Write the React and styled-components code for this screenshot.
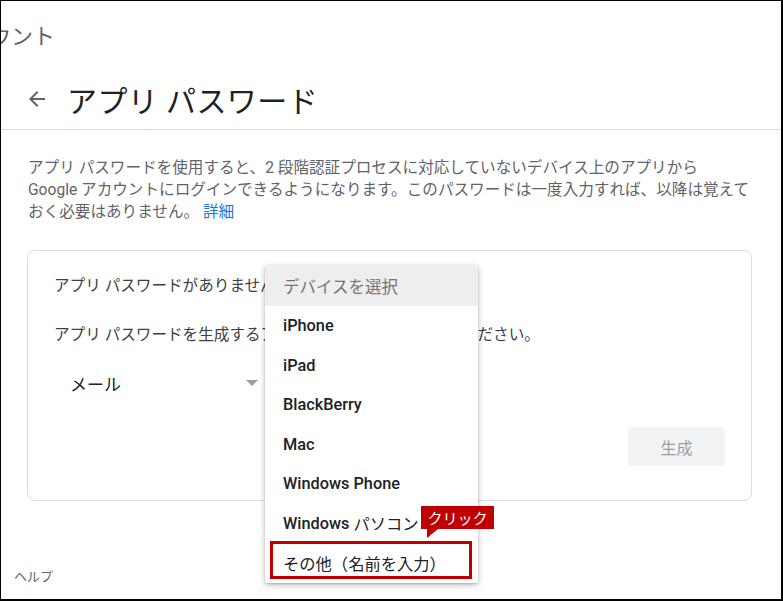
import React from 'react';
import styled, { createGlobalStyle } from 'styled-components';

const GlobalStyle = createGlobalStyle`
  body {
    margin: 0;
    background: #fff;
    font-family: Roboto, "Noto Sans CJK JP", sans-serif;
  }
  * {
    box-sizing: border-box;
  }
`;

const devices = ['iPhone', 'iPad', 'BlackBerry', 'Mac', 'Windows Phone'];

const App = () => {
  return (
    <>
      <GlobalStyle />
      <Frame>
        <TopBar>
          <Crumb>アカウント</Crumb>
        </TopBar>
        <TitleRow>
          <BackIcon viewBox='0 0 24 24'>
            <path d='M20 11H7.83l5.59-5.59L12 4l-8 8 8 8 1.41-1.41L7.83 13H20v-2z' />
          </BackIcon>
          <Title>アプリ パスワード</Title>
        </TitleRow>
        <Intro>
          アプリ パスワードを使用すると、2 段階認証プロセスに対応していないデバイス上のアプリから
          <br />
          Google アカウントにログインできるようになります。このパスワードは一度入力すれば、以降は覚えて
          <br />
          おく必要はありません。 <Link>詳細</Link>
        </Intro>
        <Card>
          <CardText>アプリ パスワードがありません。</CardText>
          <CardText $gap={25}>アプリ パスワードを生成するアプリとデバイスを選択してください。</CardText>
          <SelectRow>
            <Select>
              <span>メール</span>
              <Caret />
            </Select>
          </SelectRow>
          <Actions>
            <GenerateButton disabled>生成</GenerateButton>
          </Actions>
          <Menu>
            <MenuHeader>デバイスを選択</MenuHeader>
            {devices.map((d) => (
              <MenuItem key={d}>{d}</MenuItem>
            ))}
            <MenuItem>
              Windows <Jp>パソコン</Jp>
            </MenuItem>
            <MenuItem>
              <Jp>その他（名前を入力）</Jp>
              <Highlight />
              <Callout>クリック</Callout>
            </MenuItem>
          </Menu>
        </Card>
        <Help>ヘルプ</Help>
      </Frame>
    </>
  );
};

const Frame = styled.div`
  width: 783px;
  height: 601px;
  border-style: solid;
  border-color: #000;
  border-width: 1px 2px 2px 1px;
  overflow: hidden;
  background: #fff;
`;

const TopBar = styled.div`
  height: 65px;
  display: flex;
  align-items: center;
  overflow: hidden;
`;

const Crumb = styled.div`
  margin-left: -56px;
  font-size: 22px;
  color: #5f6368;
  white-space: nowrap;
`;

const TitleRow = styled.div`
  height: 64px;
  padding: 3px 0 0 24px;
  display: flex;
  align-items: center;
  border-bottom: 1px solid #dadce0;
`;

const BackIcon = styled.svg`
  width: 24px;
  height: 24px;
  fill: #5f6368;
  margin-right: 18px;
`;

const Title = styled.h1`
  margin: 0;
  font-size: 30px;
  font-weight: 400;
  color: #202124;
  letter-spacing: 0.4px;
`;

const Intro = styled.p`
  margin: 27px 0 0 27px;
  font-size: 15.6px;
  line-height: 22px;
  color: #5f6368;
  white-space: nowrap;
`;

const Link = styled.a`
  color: #1a73e8;
`;

const Card = styled.div`
  position: relative;
  margin: 27px 0 0 26px;
  width: 725px;
  height: 251px;
  padding: 23px 26px 0 26px;
  border: 1px solid #dadce0;
  border-radius: 8px;
`;

const CardText = styled.div`
  margin-top: ${(p) => p.$gap || 0}px;
  font-size: 15.6px;
  line-height: 24px;
  color: #3c4043;
  white-space: nowrap;
`;

const SelectRow = styled.div`
  margin-top: 16px;
  height: 40px;
  display: flex;
  align-items: center;
`;

const Select = styled.div`
  width: 213px;
  height: 40px;
  padding: 0 9px 0 16px;
  display: flex;
  align-items: center;
  justify-content: space-between;
  font-size: 17px;
  color: #202124;
`;

const Caret = styled.span`
  width: 0;
  height: 0;
  border-left: 6px solid transparent;
  border-right: 6px solid transparent;
  border-top: 6px solid #9e9e9e;
`;

const Actions = styled.div`
  margin-top: 24px;
  display: flex;
  justify-content: flex-end;
`;

const GenerateButton = styled.button`
  width: 97px;
  height: 39px;
  border: none;
  border-radius: 4px;
  background: #f1f3f4;
  color: #9aa0a6;
  font-family: Roboto, "Noto Sans CJK JP", sans-serif;
  font-size: 16px;
`;

const Menu = styled.div`
  position: absolute;
  left: 237px;
  top: 14px;
  width: 213px;
  height: 318px;
  background: #fff;
  box-shadow: 0 2px 6px rgba(0, 0, 0, 0.25), 0 1px 2px rgba(0, 0, 0, 0.15);
  border-radius: 2px;
`;

const MenuHeader = styled.div`
  height: 41px;
  padding-left: 18px;
  display: flex;
  align-items: center;
  background: #eeeeee;
  color: #757575;
  font-size: 16.5px;
`;

const MenuItem = styled.div`
  position: relative;
  height: 39.5px;
  padding-left: 18px;
  display: flex;
  align-items: center;
  font-size: 16.3px;
  font-weight: 500;
  color: #202124;
  white-space: pre;
`;

const Jp = styled.span`
  font-weight: 400;
`;

const Highlight = styled.div`
  position: absolute;
  left: 5px;
  top: -2px;
  width: 202px;
  height: 38px;
  border: 3px solid #c00000;
`;

const Callout = styled.div`
  position: absolute;
  left: 156px;
  top: -37px;
  width: 73px;
  height: 23px;
  background: #c00000;
  color: #fff;
  font-size: 15px;
  font-weight: 400;
  display: flex;
  align-items: center;
  justify-content: center;
  &::after {
    content: '';
    position: absolute;
    left: 6px;
    top: 23px;
    width: 0;
    height: 0;
    border-right: 11px solid transparent;
    border-top: 9px solid #c00000;
  }
`;

const Help = styled.div`
  margin: 66px 0 0 13px;
  font-size: 13px;
  line-height: 20px;
  color: #5f6368;
`;

export default App;
